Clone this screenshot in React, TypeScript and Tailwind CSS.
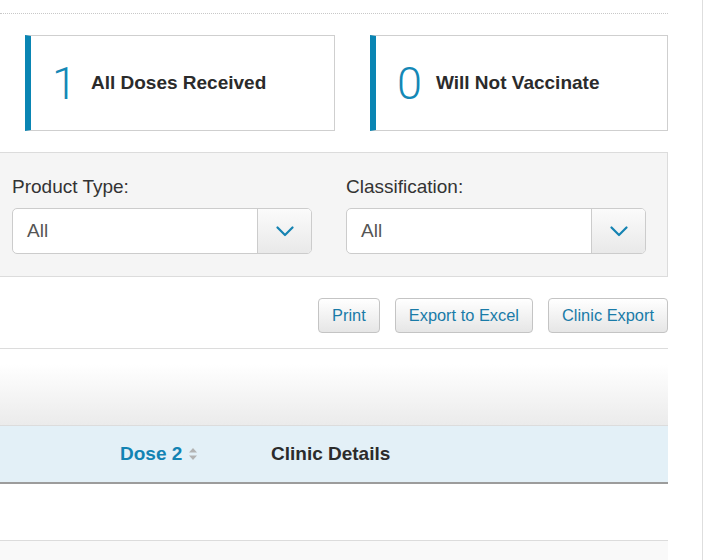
const font = { fontFamily: '"Liberation Sans", Arial, Helvetica, sans-serif' }

const StatCard = ({ count, label, className }: { count: string; label: string; className: string }) => (
  <div
    className={`flex h-[96px] items-center border border-l-[6px] border-[#cfcfcf] border-l-[#0a85b3] bg-white pl-[21px] ${className}`}
  >
    <span
      className="text-[45px] font-light leading-none text-[#1488b6]"
      style={{ fontFamily: 'Roboto, "Liberation Sans", sans-serif' }}
    >
      {count}
    </span>
    <span className="ml-[14px] text-[19px] font-bold text-[#2b2b2b]">{label}</span>
  </div>
)

const Chevron = () => (
  <svg width="18" height="11" viewBox="0 0 18 11" fill="none">
    <path d="M1.5 1.5 L9 9 L16.5 1.5" stroke="#1583b2" strokeWidth="2.2" strokeLinecap="round" strokeLinejoin="round" />
  </svg>
)

const SelectBox = ({ label }: { label: string }) => (
  <div className="w-[300px]">
    <div className="h-[26px] text-[19px] leading-[26px] text-[#333]">{label}</div>
    <div className="mt-[8px] flex h-[46px] overflow-hidden rounded-[5px] border border-[#cccccc] bg-white">
      <div className="flex flex-1 items-center pl-[14px] text-[19px] text-[#555]">All</div>
      <div className="flex w-[54px] items-center justify-center border-l border-[#cccccc] bg-gradient-to-b from-[#fbfbfb] to-[#e9e9e9]">
        <Chevron />
      </div>
    </div>
  </div>
)

const ActionButton = ({ children }: { children: string }) => (
  <button className="h-[35px] rounded-[4px] border border-[#c4c4c4] bg-gradient-to-b from-white to-[#e6e6e6] px-[13px] text-[16.4px] text-[#1a7ba8]">
    {children}
  </button>
)

const SortIcon = () => (
  <svg width="10" height="14" viewBox="0 0 10 14" className="ml-[6px]">
    <path d="M5 1 L9 5.5 L1 5.5 Z" fill="#b3b3b3" />
    <path d="M5 13 L9 8.5 L1 8.5 Z" fill="#b3b3b3" />
  </svg>
)

export default function App() {
  return (
    <div className="h-[560px] w-[703px] overflow-hidden border-r border-[#dedede] bg-white" style={font}>
      <div className="w-[668px]">
        <div className="h-[13px]" />
        <div className="border-t border-dotted border-[#c8c8c8]" />

        <div className="mt-[21px] flex">
          <StatCard count="1" label="All Doses Received" className="ml-[25px] w-[310px]" />
          <StatCard count="0" label="Will Not Vaccinate" className="ml-[35px] w-[298px]" />
        </div>

        <div className="mt-[21px] border border-l-0 border-[#dcdcdc] bg-[#f5f5f5] pb-[22px] pl-[12px] pt-[21px]">
          <div className="flex gap-[34px]">
            <SelectBox label="Product Type:" />
            <SelectBox label="Classification:" />
          </div>
        </div>

        <div className="mt-[21px] flex justify-end gap-[15px]">
          <ActionButton>Print</ActionButton>
          <ActionButton>Export to Excel</ActionButton>
          <ActionButton>Clinic Export</ActionButton>
        </div>

        <div className="mt-[15px] h-[78px] border-b border-t border-[#dcdcdc] bg-gradient-to-b from-white from-20% to-[#ebebeb]" />

        <div className="flex h-[58px] items-center border-b-2 border-[#9c9c9c] bg-[#e3f0f7] text-[19px] font-bold">
          <div className="ml-[120px] flex w-[151px] items-center text-[#1283b3]">
            Dose 2
            <SortIcon />
          </div>
          <div className="text-[#2b2b2b]">Clinic Details</div>
        </div>

        <div className="h-[57px] border-b border-[#dcdcdc] bg-white" />
        <div className="h-[40px] bg-[#f9f9f9]" />
      </div>
    </div>
  )
}
